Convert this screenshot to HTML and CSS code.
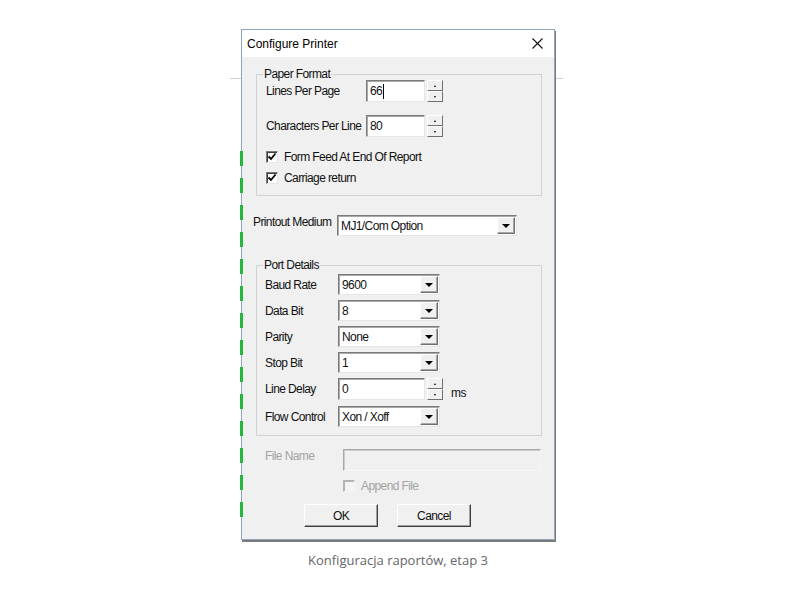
FILE: index.html
```html
<!DOCTYPE html>
<html lang="en">
<head>
    <meta charset="UTF-8">
    <meta name="viewport" content="width=device-width, initial-scale=1.0">
    <title>Configure Printer</title>
    <link rel="stylesheet" href="styles.css">
</head>
<body>
    <div class="stage">
        <div class="dialog">
            <div class="titlebar">
                <span class="title">Configure Printer</span>
                <svg class="close" width="11" height="11" viewBox="0 0 11 11">
                    <path d="M0.5 0.5 L10.5 10.5 M10.5 0.5 L0.5 10.5" stroke="#111" stroke-width="1.1" fill="none"/>
                </svg>
            </div>

            <div class="dlg-body">
                <fieldset class="group paper">
                    <legend>Paper Format</legend>
                    <div class="row">
                        <label class="lbl lbl-wide">Lines Per Page</label>
                        <div class="edit edit-short"><span>66</span><i class="caret"></i></div>
                        <div class="spin"><b class="up"></b><b class="down"></b></div>
                    </div>
                    <div class="row row-gap">
                        <label class="lbl lbl-wide">Characters Per Line</label>
                        <div class="edit edit-short"><span>80</span></div>
                        <div class="spin"><b class="up"></b><b class="down"></b></div>
                    </div>
                    <div class="cb-row first">
                        <span class="check"><svg width="10" height="10" viewBox="0 0 10 10"><path d="M1.5 4.5 L4 7 L8.5 1.5" stroke="#000" stroke-width="1.8" fill="none"/></svg></span>
                        <span>Form Feed At End Of Report</span>
                    </div>
                    <div class="cb-row">
                        <span class="check"><svg width="10" height="10" viewBox="0 0 10 10"><path d="M1.5 4.5 L4 7 L8.5 1.5" stroke="#000" stroke-width="1.8" fill="none"/></svg></span>
                        <span>Carriage return</span>
                    </div>
                </fieldset>

                <div class="medium-row">
                    <label class="lbl medium-lbl">Printout Medium</label>
                    <div class="combo combo-wide"><span>MJ1/Com Option</span><i class="drop"></i></div>
                </div>

                <fieldset class="group port">
                    <legend>Port Details</legend>
                    <div class="row">
                        <label class="lbl lbl-port">Baud Rate</label>
                        <div class="combo"><span>9600</span><i class="drop"></i></div>
                    </div>
                    <div class="row port-gap">
                        <label class="lbl lbl-port">Data Bit</label>
                        <div class="combo"><span>8</span><i class="drop"></i></div>
                    </div>
                    <div class="row port-gap">
                        <label class="lbl lbl-port">Parity</label>
                        <div class="combo"><span>None</span><i class="drop"></i></div>
                    </div>
                    <div class="row port-gap">
                        <label class="lbl lbl-port">Stop Bit</label>
                        <div class="combo"><span>1</span><i class="drop"></i></div>
                    </div>
                    <div class="row port-gap">
                        <label class="lbl lbl-port">Line Delay</label>
                        <div class="edit edit-long"><span>0</span></div>
                        <div class="spin"><b class="up"></b><b class="down"></b></div>
                        <span class="unit">ms</span>
                    </div>
                    <div class="row flow-gap">
                        <label class="lbl lbl-port">Flow Control</label>
                        <div class="combo"><span>Xon / Xoff</span><i class="drop"></i></div>
                    </div>
                </fieldset>

                <div class="file-row">
                    <label class="lbl file-lbl">File Name</label>
                    <div class="edit edit-file"></div>
                </div>
                <div class="append-row">
                    <span class="check off"></span>
                    <span>Append File</span>
                </div>

                <div class="buttons">
                    <button class="btn">OK</button>
                    <button class="btn">Cancel</button>
                </div>
            </div>
        </div>
        <p class="caption">Konfiguracja raportów, etap 3</p>
    </div>
</body>
</html>
```

FILE: styles.css
```css
body {
    margin: 0;
    background: #fff;
    font-family: "Liberation Sans", Arial, sans-serif;
    font-size: 12px;
    color: #111;
}
.stage {
    position: relative;
    width: 314px;
    margin: 29px 0 0 241px;
}
/* line of the app window behind the dialog */
.stage::before {
    content: "";
    position: absolute;
    left: -11px;
    right: -8px;
    top: 49px;
    border-top: 1px solid #cfcfcf;
}
.dialog {
    position: relative;
    background: #f0f0f0;
    border: 1px solid #8ea5be;
    box-shadow: 1px 2px 0 #7b7b7b;
    letter-spacing: -0.6px;
    white-space: nowrap;
}
/* green dashed marker on the left edge */
.dialog::before {
    content: "";
    position: absolute;
    left: -2px;
    top: 121px;
    width: 3px;
    height: 372px;
    background: repeating-linear-gradient(to bottom, #25b63e 0 15px, transparent 15px 27px);
}
.titlebar {
    display: flex;
    align-items: center;
    justify-content: space-between;
    height: 27px;
    background: #fff;
    padding: 0 11px 0 5px;
    font-size: 12px;
    letter-spacing: 0;
    color: #000;
}
.dlg-body {
    padding: 11px 12px 12px 11px;
}
.group {
    margin: 0 0 0 3px;
    padding: 0 8px 7px;
    border: 1px solid #d2d2d2;
    min-width: 0;
}
.group legend {
    padding: 0 1px;
    margin-left: -2px;
    line-height: 12px;
}
.row {
    display: flex;
    align-items: center;
}
.row-gap {
    margin-top: 13px;
}
.port-gap {
    margin-top: 5px;
}
.flow-gap {
    margin-top: 6px;
}
.lbl {
    flex: none;
}
.lbl-wide {
    width: 100px;
    padding-left: 1px;
}
.lbl-port {
    width: 73px;
}
.edit {
    box-sizing: border-box;
    height: 22px;
    background: #fff;
    border: 1px solid;
    border-color: #7a7a7a #e6e6e6 #e6e6e6 #7a7a7a;
    box-shadow: inset 1px 1px 0 #a9a9a9;
    padding-left: 3px;
    display: flex;
    align-items: center;
}
.edit-short {
    width: 59px;
}
.edit-long {
    width: 87px;
}
.caret {
    width: 1px;
    height: 15px;
    background: #000;
    margin-left: 1px;
}
.spin {
    display: flex;
    flex-direction: column;
    width: 16px;
    height: 22px;
    margin-left: 2px;
}
.spin b {
    flex: 1;
    display: flex;
    align-items: center;
    justify-content: center;
    background: #f0f0f0;
    border: 1px solid;
    border-color: #fff #6f6f6f #6f6f6f #fff;
}
.spin b::after {
    content: "";
    border-left: 1.5px solid transparent;
    border-right: 1.5px solid transparent;
}
.spin .up::after {
    border-bottom: 2px solid #000;
}
.spin .down::after {
    border-top: 2px solid #000;
}
.unit {
    align-self: flex-end;
    margin: 0 0 0 8px;
}
.cb-row {
    display: flex;
    align-items: center;
    gap: 6px;
    height: 20px;
    padding-left: 1px;
    margin-top: 1px;
}
.cb-row.first {
    margin-top: 10px;
}
.check {
    box-sizing: border-box;
    width: 12px;
    height: 12px;
    background: #fff;
    border: 1px solid;
    border-color: #7a7a7a #e6e6e6 #e6e6e6 #7a7a7a;
    box-shadow: inset 1px 1px 0 #3c3c3c;
    display: flex;
    align-items: center;
    justify-content: center;
}
.check.off {
    background: #f4f4f4;
    box-shadow: inset 1px 1px 0 #b4b4b4;
    border-color: #b4b4b4 #f4f4f4 #f4f4f4 #b4b4b4;
}
.medium-row {
    display: flex;
    align-items: flex-start;
    margin-top: 19px;
}
.medium-lbl {
    width: 84px;
    line-height: 15px;
}
.combo {
    box-sizing: border-box;
    width: 102px;
    height: 21px;
    background: #fff;
    border: 1px solid;
    border-color: #7a7a7a #e6e6e6 #e6e6e6 #7a7a7a;
    box-shadow: inset 1px 1px 0 #a9a9a9;
    display: flex;
    align-items: center;
    padding: 1px 1px 1px 3px;
}
.combo span {
    flex: 1;
}
.combo-wide {
    width: 180px;
}
.drop {
    box-sizing: border-box;
    width: 18px;
    height: 17px;
    background: #f0f0f0;
    border: 1px solid;
    border-color: #fff #6f6f6f #6f6f6f #fff;
    box-shadow: inset -1px -1px 0 #a8a8a8;
    display: flex;
    align-items: center;
    justify-content: center;
}
.drop::after {
    content: "";
    border-left: 4px solid transparent;
    border-right: 4px solid transparent;
    border-top: 4px solid #000;
}
.port {
    margin-top: 23px;
    padding-top: 3px;
    padding-bottom: 8px;
}
.file-row {
    display: flex;
    align-items: flex-start;
    margin-top: 13px;
    color: #a3a3a3;
}
.file-lbl {
    width: 78px;
    padding-left: 12px;
    line-height: 15px;
}
.edit-file {
    width: 198px;
    background: #f0f0f0;
    border-color: #a8a8a8 #f6f6f6 #f6f6f6 #a8a8a8;
    box-shadow: inset 1px 1px 0 #cdcdcd;
}
.append-row {
    display: flex;
    align-items: center;
    gap: 6px;
    height: 15px;
    margin-top: 7px;
    padding-left: 90px;
    color: #a3a3a3;
}
.buttons {
    display: flex;
    gap: 19px;
    margin-top: 11px;
    padding-left: 51px;
}
.btn {
    box-sizing: border-box;
    width: 74px;
    height: 23px;
    padding: 0;
    background: #f0f0f0;
    border: 1px solid;
    border-color: #fff #3f3f3f #3f3f3f #fff;
    box-shadow: inset -1px -1px 0 #a0a0a0;
    font: inherit;
    letter-spacing: inherit;
    color: #111;
}
.caption {
    margin: 11px 0 0;
    text-align: center;
    font-family: "Open Sans", sans-serif;
    font-size: 13px;
    color: #666;
}
```
